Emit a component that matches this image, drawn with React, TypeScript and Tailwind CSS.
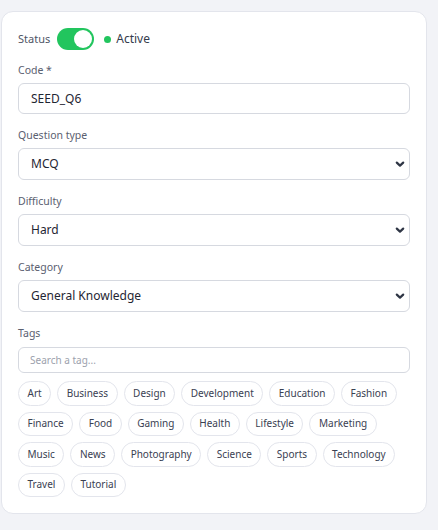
import { useState } from 'react';

const TAGS = [
  'Art',
  'Business',
  'Design',
  'Development',
  'Education',
  'Fashion',
  'Finance',
  'Food',
  'Gaming',
  'Health',
  'Lifestyle',
  'Marketing',
  'Music',
  'News',
  'Photography',
  'Science',
  'Sports',
  'Technology',
  'Travel',
  'Tutorial',
];

function Chevron() {
  return (
    <svg
      className="pointer-events-none absolute right-[5px] top-1/2 h-[10px] w-[10px] -translate-y-1/2 text-[#2f3645]"
      viewBox="0 0 10 10"
      fill="none"
      aria-hidden="true"
    >
      <path d="M1.8 3.6 L5 6.6 L8.2 3.6" stroke="currentColor" strokeWidth="2.2" strokeLinecap="round" strokeLinejoin="round" />
    </svg>
  );
}

function SelectField({
  label,
  value,
  options,
  onChange,
}: {
  label: string;
  value: string;
  options: string[];
  onChange: (v: string) => void;
}) {
  return (
    <div className="mt-[13px]">
      <label className="mb-[5px] block text-[10.5px] leading-4 text-[#5a6070]">{label}</label>
      <div className="relative">
        <select
          value={value}
          onChange={(e) => onChange(e.target.value)}
          className="h-8 w-full appearance-none rounded-[6px] border border-[#d6d9e0] bg-white pl-3 pr-8 text-[12px] text-[#1f2633] outline-none"
        >
          {options.map((o) => (
            <option key={o}>{o}</option>
          ))}
        </select>
        <Chevron />
      </div>
    </div>
  );
}

export default function App() {
  const [active, setActive] = useState(true);
  const [code, setCode] = useState('SEED_Q6');
  const [type, setType] = useState('MCQ');
  const [difficulty, setDifficulty] = useState('Hard');
  const [category, setCategory] = useState('General Knowledge');
  const [query, setQuery] = useState('');

  const shown = TAGS.filter((t) => t.toLowerCase().includes(query.toLowerCase()));

  return (
    <div className="min-h-[530px] bg-[#f2f3f7] pl-px pt-[11px] font-['Noto_Sans',sans-serif]">
      <div className="w-[426px] rounded-[12px] border border-[#e3e5ec] bg-white p-4">
        {/* status toggle */}
        <div className="flex h-[22px] items-center">
          <span className="text-[11px] text-[#4f5566]">Status</span>
          <button
            type="button"
            onClick={() => setActive(!active)}
            className={`ml-[7px] flex h-[22px] w-[37px] items-center rounded-full p-[2px] ${
              active ? 'justify-end bg-[#22c55e]' : 'justify-start bg-[#d1d5db]'
            }`}
          >
            <span className="h-[18px] w-[18px] rounded-full bg-white" />
          </button>
          <span className={`ml-[10px] h-[7px] w-[7px] rounded-full ${active ? 'bg-[#22c55e]' : 'bg-[#9ca3af]'}`} />
          <span className="ml-[5px] text-[12px] text-[#343b4c]">{active ? 'Active' : 'Inactive'}</span>
        </div>

        <div className="mt-3">
          <label className="mb-[5px] block text-[10.5px] leading-4 text-[#5a6070]">Code *</label>
          <input
            value={code}
            onChange={(e) => setCode(e.target.value)}
            className="h-[31px] w-full rounded-[6px] border border-[#d6d9e0] bg-white px-3 text-[12px] text-[#1f2633] outline-none"
          />
        </div>

        <SelectField label="Question type" value={type} options={['MCQ', 'True / False', 'Short answer']} onChange={setType} />
        <SelectField label="Difficulty" value={difficulty} options={['Easy', 'Medium', 'Hard']} onChange={setDifficulty} />
        <SelectField
          label="Category"
          value={category}
          options={['General Knowledge', 'Science', 'History', 'Sports']}
          onChange={setCategory}
        />

        <div className="mt-[13px]">
          <label className="mb-[5px] block text-[10.5px] leading-4 text-[#5a6070]">Tags</label>
          <input
            value={query}
            onChange={(e) => setQuery(e.target.value)}
            placeholder="Search a tag..."
            className="h-[26px] w-full rounded-[6px] border border-[#d6d9e0] bg-white px-[11px] text-[10px] text-[#1f2633] outline-none placeholder:text-[#9ca1ad]"
          />
          <div className="mt-2 flex flex-wrap gap-x-[6px] gap-y-[6px]">
            {shown.map((t) => (
              <button
                key={t}
                type="button"
                className="flex h-[24.5px] items-center rounded-full border border-[#e3e5ec] bg-white px-[8.5px] text-[10px] text-[#3a4152]"
              >
                {t}
              </button>
            ))}
          </div>
        </div>
      </div>
    </div>
  );
}
